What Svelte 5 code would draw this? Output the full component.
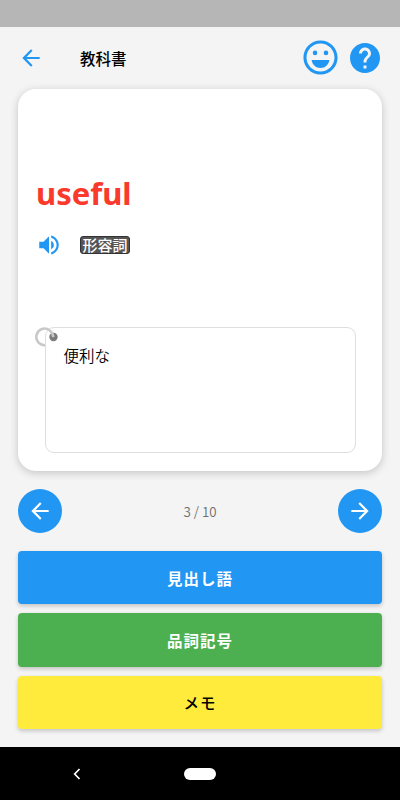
<script>
  const words = [
    { word: "useful", partOfSpeech: "形容詞", meaning: "便利な" },
  ];

  const total = 10;

  let position = $state(3);
  let current = $derived(words[(position - 1) % words.length]);

  const actions = [
    { id: "headword", label: "見出し語" },
    { id: "speech", label: "品詞記号" },
    { id: "memo", label: "メモ" },
  ];

  function previous() {
    if (position > 1) position -= 1;
  }

  function next() {
    if (position < total) position += 1;
  }
</script>

<div class="screen">
  <div class="status-bar"></div>

  <header class="toolbar">
    <button class="icon-button back" aria-label="戻る">
      <svg viewBox="0 0 24 24">
        <path d="M20 11H7.83l5.59-5.59L12 4l-8 8 8 8 1.41-1.41L7.83 13H20v-2z" />
      </svg>
    </button>
    <h1>教科書</h1>
    <button class="icon-button mood" aria-label="気分">
      <svg viewBox="0 0 24 24">
        <path
          d="M12 2C6.48 2 2 6.48 2 12s4.48 10 10 10 10-4.48 10-10S17.52 2 12 2zm0 18.2c-4.53 0-8.2-3.67-8.2-8.2s3.67-8.2 8.2-8.2 8.2 3.67 8.2 8.2-3.67 8.2-8.2 8.2z"
        />
        <circle cx="8.8" cy="9.3" r="1.35" />
        <circle cx="15.2" cy="9.3" r="1.35" />
        <path d="M6.8 13.4h10.4c-.4 2.7-2.5 4.7-5.2 4.7s-4.8-2-5.2-4.7z" />
      </svg>
    </button>
    <button class="icon-button help" aria-label="ヘルプ">
      <svg viewBox="0 0 24 24">
        <path
          d="M12 2C6.48 2 2 6.48 2 12s4.48 10 10 10 10-4.48 10-10S17.52 2 12 2zm1 17h-2v-2h2v2zm2.07-7.75l-.9.92C13.45 12.9 13 13.5 13 15h-2v-.5c0-1.1.45-2.1 1.17-2.83l1.24-1.26c.37-.36.59-.86.59-1.41 0-1.1-.9-2-2-2s-2 .9-2 2H8c0-2.21 1.79-4 4-4s4 1.79 4 4c0 .88-.36 1.68-.93 2.25z"
        />
      </svg>
    </button>
  </header>

  <main>
    <section class="card">
      <h2>{current.word}</h2>
      <div class="details">
        <button class="icon-button speaker" aria-label="発音">
          <svg viewBox="0 0 24 24">
            <path
              d="M3 9v6h4l5 5V4L7 9H3zm13.5 3c0-1.77-1.02-3.29-2.5-4.03v8.05c1.48-.73 2.5-2.25 2.5-4.02zM14 3.23v2.06c2.89.86 5 3.54 5 6.71s-2.11 5.85-5 6.71v2.06c4.01-.91 7-4.49 7-8.77s-2.99-7.86-7-8.77z"
            />
          </svg>
        </button>
        <span class="tag">{current.partOfSpeech}</span>
      </div>
      <div class="note">
        <svg class="ring" viewBox="0 0 26 22">
          <circle cx="19.5" cy="11" r="4.2" fill="#7b7b7b" />
          <path
            d="M11 19.2A8.3 8.3 0 1 1 15.5 4.2C17.7 5.7 19 8 19.3 11.2"
            fill="none"
            stroke="#c8c8c8"
            stroke-width="2.6"
          />
        </svg>
        <p>{current.meaning}</p>
      </div>
    </section>

    <nav class="pager">
      <button onclick={previous} aria-label="前へ">
        <svg viewBox="0 0 24 24">
          <path d="M20 11H7.83l5.59-5.59L12 4l-8 8 8 8 1.41-1.41L7.83 13H20v-2z" />
        </svg>
      </button>
      <span>{position} / {total}</span>
      <button onclick={next} aria-label="次へ">
        <svg viewBox="0 0 24 24">
          <path d="M12 4l-1.41 1.41L16.17 11H4v2h12.17l-5.58 5.59L12 20l8-8z" />
        </svg>
      </button>
    </nav>

    <div class="actions">
      {#each actions as action (action.id)}
        <button class={action.id}>{action.label}</button>
      {/each}
    </div>
  </main>

  <footer class="system-nav">
    <svg class="chevron" viewBox="0 0 8 12">
      <path d="M6.5 1L1.7 6l4.8 5" />
    </svg>
    <span class="home"></span>
  </footer>
</div>

<style>
  :global(body) {
    margin: 0;
    background: #f4f4f4;
  }

  .screen {
    display: flex;
    flex-direction: column;
    width: 400px;
    height: 800px;
    overflow: hidden;
    background: #f4f4f4;
    color: #000000;
    font-family: "Noto Sans CJK JP", sans-serif;
  }

  .screen,
  .screen * {
    box-sizing: border-box;
  }

  button {
    padding: 0;
    border: 0;
    font-family: inherit;
    cursor: pointer;
  }

  svg {
    display: block;
    flex-shrink: 0;
  }

  .status-bar {
    height: 27px;
    flex-shrink: 0;
    background: #b6b6b6;
  }

  .toolbar {
    display: flex;
    align-items: center;
    height: 62px;
    flex-shrink: 0;
    padding: 0 18px;
  }

  .icon-button {
    background: none;
  }

  .icon-button svg {
    width: 100%;
    height: 100%;
    fill: #2196f3;
  }

  .back {
    width: 26px;
    height: 26px;
  }

  h1 {
    flex: 1;
    margin: 0 0 0 36px;
    font-size: 15.5px;
    font-weight: 500;
    line-height: 24px;
  }

  .mood {
    width: 41px;
    height: 41px;
    margin-bottom: 1px;
  }

  .help {
    width: 36px;
    height: 36px;
    margin-left: 6px;
    margin-right: -0.5px;
  }

  main {
    display: flex;
    flex: 1;
    flex-direction: column;
    padding: 0 18px;
  }

  .card {
    display: flex;
    flex-direction: column;
    height: 382px;
    padding: 83px 26.5px 18px 18px;
    border-radius: 18px;
    background: #ffffff;
    box-shadow: 0 2px 9px rgba(0, 0, 0, 0.2);
  }

  h2 {
    margin: 0;
    color: #f93a2c;
    font-family: "Noto Sans", sans-serif;
    font-size: 31px;
    font-weight: 700;
    line-height: 42px;
  }

  .details {
    display: flex;
    align-items: center;
    height: 26px;
    margin-top: 18px;
  }

  .speaker {
    width: 26px;
    height: 26px;
  }

  .tag {
    width: 50px;
    height: 18px;
    margin-left: 18px;
    border: 1px solid #333333;
    border-radius: 3px;
    background: #555555;
    color: #ffffff;
    font-size: 15px;
    font-weight: 500;
    line-height: 15px;
    text-align: center;
  }

  .note {
    position: relative;
    flex: 1;
    margin: 69px 0 0 8.5px;
    padding: 15px 18px;
    border: 1px solid #dedede;
    border-radius: 9px;
  }

  .ring {
    position: absolute;
    top: -2.5px;
    left: -12px;
    width: 26px;
    height: 22px;
  }

  .note p {
    margin: 0;
    font-size: 15.5px;
    font-weight: 350;
    line-height: 24px;
  }

  .pager {
    display: flex;
    align-items: center;
    justify-content: space-between;
    height: 80px;
    color: #6f6f6f;
    font-size: 13.3px;
    font-weight: 350;
  }

  .pager button {
    display: flex;
    align-items: center;
    justify-content: center;
    width: 44px;
    height: 44px;
    border-radius: 50%;
    background: #2196f3;
  }

  .pager button svg {
    width: 26px;
    height: 26px;
    fill: #ffffff;
  }

  .actions {
    display: flex;
    flex-direction: column;
    gap: 9px;
  }

  .actions button {
    height: 53.3px;
    border-radius: 4px;
    color: #ffffff;
    font-size: 15.5px;
    font-weight: 700;
    letter-spacing: 1px;
    box-shadow: 0 2px 4px rgba(0, 0, 0, 0.2);
  }

  .actions .headword {
    background: #2196f3;
  }

  .actions .speech {
    background: #4caf50;
  }

  .actions .memo {
    background: #ffeb3b;
    color: #000000;
    font-weight: 500;
  }

  .system-nav {
    display: flex;
    align-items: center;
    height: 53px;
    flex-shrink: 0;
    padding-left: 73px;
    background: #000000;
  }

  .chevron {
    width: 8px;
    height: 12px;
    fill: none;
    stroke: #ffffff;
    stroke-width: 1.7;
  }

  .home {
    width: 32px;
    height: 12px;
    margin-left: 103px;
    border-radius: 6px;
    background: #ffffff;
  }
</style>
